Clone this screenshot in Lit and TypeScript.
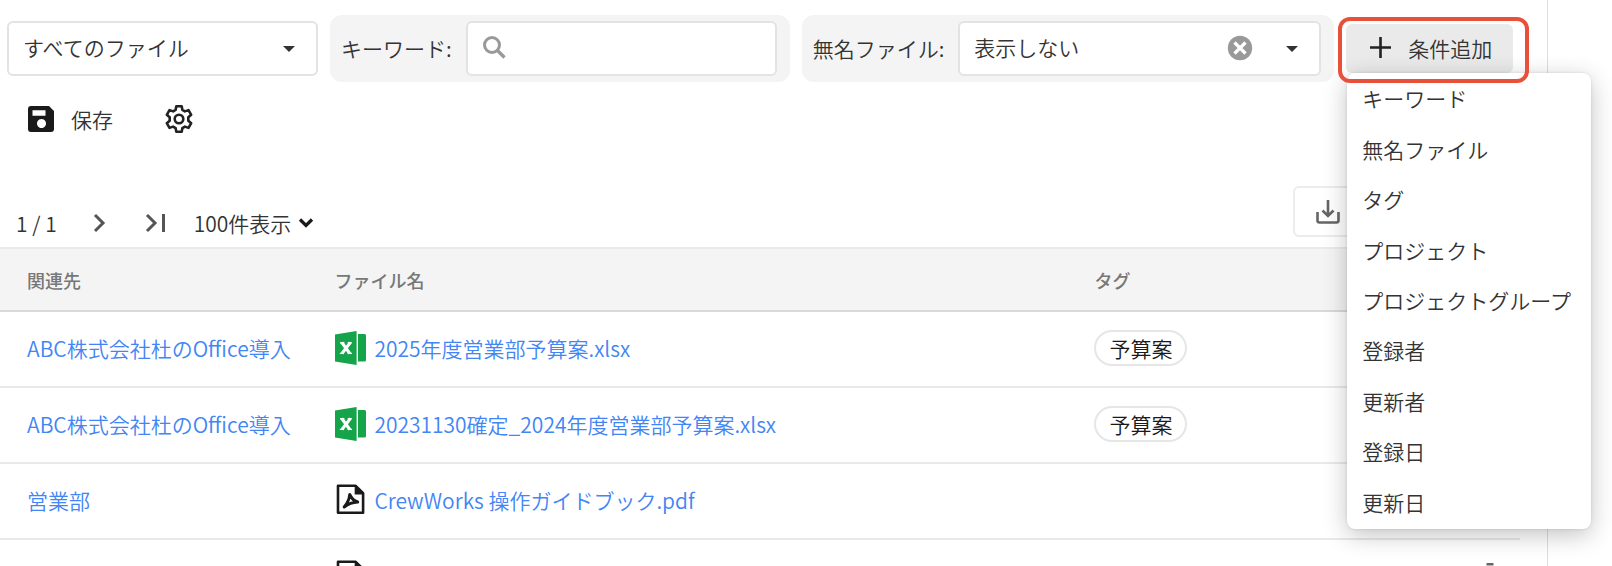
import { LitElement, html, css, svg } from "lit";
import { customElement, state } from "lit/decorators.js";

const excelIcon = svg`<svg class="file-icon" width="34" height="34" viewBox="0 0 34 34" aria-hidden="true">
  <path fill="#16a44a" d="M1 3.6 22.6 0v34L1 30.6zM24 3h6.500q1.500 0 1.500 1.500V29q0 1.500-1.500 1.500H24z"/>
  <path fill="none" stroke="#fff" stroke-width="3" d="m7.800 11.500 8 11M16.300 11.500l-8.300 11"/>
  <path stroke="#fff" stroke-width="1.400" d="M6 11.700h4.400M13.800 11.700h4M5.800 22.400h4.200M13.600 22.400h4.400"/>
</svg>`;

const pdfIcon = svg`<svg class="file-icon" width="34" height="34" viewBox="0 0 34 34" aria-hidden="true">
  <path fill="none" stroke="#1a1a1a" stroke-width="2.600" stroke-linejoin="round" d="M4 2.800h17.700l7.400 7.400v19.500H4z"/>
  <path fill="#1a1a1a" d="M20.700 2.500h1.500l7.500 7.500v1.500h-9z"/>
  <path fill="none" stroke="#1a1a1a" stroke-width="3" stroke-linecap="round" stroke-linejoin="round" d="M15.700 11.500c-.3 4.500-2.500 9-5.500 12.500 3.500-2.800 8-4.800 13.500-5-3.600-1-6.300-3.800-8-7.500z"/>
</svg>`;

const trashIcon = svg`<svg width="26" height="26" viewBox="0 0 26 26" fill="none" stroke="#666" stroke-width="2.400">
  <path d="M9.500 1.200h7M3 5h20M5.500 5v19h15V5M10.500 10v9M15.500 10v9"/>
</svg>`;

const caret = svg`<svg class="caret" width="14" height="8" viewBox="0 0 14 8" aria-hidden="true"><path fill="#333" d="M1 1h12L7 7z"/></svg>`;

interface FileRow {
  owner: string;
  kind: "excel" | "pdf";
  name: string;
  tag?: string;
}

@customElement("app-root")
export class AppRoot extends LitElement {
  @state() private files: FileRow[] = [
    { owner: "ABC株式会社杜のOffice導入", kind: "excel", name: "2025年度営業部予算案.xlsx", tag: "予算案" },
    { owner: "ABC株式会社杜のOffice導入", kind: "excel", name: "20231130確定_2024年度営業部予算案.xlsx", tag: "予算案" },
    { owner: "営業部", kind: "pdf", name: "CrewWorks 操作ガイドブック.pdf" },
    { owner: "", kind: "pdf", name: "CrewWorks 操作ガイドブック.pdf" },
  ];

  private conditions = ["キーワード", "無名ファイル", "タグ", "プロジェクト", "プロジェクトグループ", "登録者", "更新者", "登録日", "更新日"];

  static styles = css`
    :host {
      display: grid;
      grid-template-columns: minmax(0, 1fr) 64px;
      height: 100vh;
      overflow: hidden;
      background: #fff;
      color: #333;
      font-family: "Noto Sans CJK JP", sans-serif;
      font-size: 21px;
      font-weight: 350;
      line-height: 32px;
    }
    * { box-sizing: border-box; }
    button, select, input {
      font: inherit;
      color: inherit;
      background: none;
      border: 0;
      padding: 0;
      margin: 0;
      outline: none;
    }
    select { appearance: none; }
    a { color: #4285f4; text-decoration: none; }
    svg { display: block; flex: none; }
    .main { border-right: 1px solid #ddd; padding-top: 15px; }
    .filters { display: flex; gap: 12px; padding-left: 7px; align-items: center; }
    .group {
      display: flex;
      align-items: center;
      gap: 14px;
      padding: 6px 13px 6px 11px;
      background: #f4f4f4;
      border-radius: 12px;
    }
    .box {
      display: flex;
      align-items: center;
      width: 311px;
      height: 55px;
      padding: 0 20px 4px 14px;
      background: #fff;
      border: 2px solid #e3e3e3;
      border-radius: 6px;
    }
    .box.wide { width: 363px; }
    .box select, .box input { flex: 1; min-width: 0; height: 32px; }
    .box .caret { margin-top: 4px; }
    .clear { margin: 3px 32px 0 0; }
    .group label { padding-bottom: 2px; }
    .add { position: relative; }
    .add-button {
      display: flex;
      align-items: center;
      gap: 16px;
      height: 49px;
      padding: 0 21px 2px 23px;
      background: #eaeaea;
      border-radius: 6px;
    }
    .frame {
      position: absolute;
      inset: -7px -16px -10px -8px;
      border: 4px solid #e8503a;
      border-radius: 12px;
      z-index: 2;
      pointer-events: none;
    }
    .menu {
      position: absolute;
      top: 49px;
      left: 1px;
      height: 456px;
      margin: 0;
      padding: 0 0 2px;
      display: flex;
      flex-direction: column;
      list-style: none;
      background: #fff;
      border-radius: 8px;
      box-shadow: 0 6px 24px rgba(0, 0, 0, 0.24), 0 0 3px rgba(0, 0, 0, 0.12);
      z-index: 1;
    }
    .menu li { flex: 1; display: flex; }
    .menu button { width: 100%; padding: 0 20px 0 15px; text-align: left; white-space: nowrap; }
    .actions { display: flex; align-items: center; gap: 51px; padding: 21px 26px 0; }
    .save { display: flex; align-items: center; gap: 15px; }
    .toolbar { display: flex; align-items: flex-start; justify-content: space-between; padding: 51px 26px 8px 16px; }
    .pager { display: flex; align-items: center; padding-top: 21px; }
    .next { margin: 0 36px 0 34px; }
    .last { margin-right: 27px; }
    .count { display: flex; align-items: center; gap: 6px; }
    .export {
      display: flex;
      align-items: center;
      width: 228px;
      height: 51px;
      padding-left: 20px;
      border: 2px solid #ececec;
      border-radius: 6px;
    }
    table { width: calc(100% - 27px); border-collapse: separate; border-spacing: 0; table-layout: fixed; }
    .table-wrap { background: linear-gradient(#f4f4f4 0 0) top / 100% 65px no-repeat; }
    .col-owner { width: 22%; }
    .col-file { width: 50%; }
    .col-actions { width: 60px; }
    th {
      height: 65px;
      padding: 0;
      border-top: 2px solid #eaeaea;
      border-bottom: 2px solid #d9d9d9;
      color: #777;
      font-size: 18px;
      font-weight: 500;
      text-align: left;
    }
    td { height: 76px; padding: 0 0 2px; border-bottom: 2px solid #e9e9e9; }
    th:first-child, td:first-child { padding-left: 27px; }
    .file { display: flex; align-items: center; gap: 6px; }
    .delete { display: block; margin: 0 auto; }
    .tag {
      display: inline-block;
      height: 36px;
      padding: 0 13px;
      border: 2px solid #e6e6e6;
      border-radius: 18px;
      color: #1a1a1a;
    }
  `;

  render() {
    return html`
      <main class="main">
        <div class="filters">
          <div class="box">
            <select aria-label="ファイル"><option>すべてのファイル</option></select>
            ${caret}
          </div>
          <div class="group">
            <label for="keyword">キーワード:</label>
            <div class="box">
              <svg width="24" height="24" viewBox="0 0 24 24" aria-hidden="true">
                <circle cx="10" cy="10" r="7.500" fill="none" stroke="#999" stroke-width="3"/>
                <path d="m15.500 15.500 7 7" stroke="#999" stroke-width="3.400"/>
              </svg>
              <input id="keyword" type="text" />
            </div>
          </div>
          <div class="group">
            <label for="unnamed">無名ファイル:</label>
            <div class="box wide">
              <select id="unnamed"><option>表示しない</option></select>
              <button class="clear" aria-label="クリア">
                <svg width="26" height="26" viewBox="0 0 26 26"><circle cx="13" cy="13" r="12.200" fill="#999"/><path d="m7.500 7.500 11 11M18.500 7.500l-11 11" stroke="#fff" stroke-width="3.200"/></svg>
              </button>
              ${caret}
            </div>
          </div>
          <div class="add">
            <button class="add-button">
              <svg width="23" height="23" viewBox="0 0 23 23"><path d="M11.500 1v21M1 11.500h21" stroke="#222" stroke-width="2.600"/></svg>
              条件追加
            </button>
            <ul class="menu">
              ${this.conditions.map((c) => html`<li><button>${c}</button></li>`)}
            </ul>
            <div class="frame"></div>
          </div>
        </div>
        <div class="actions">
          <button class="save">
            <svg width="30" height="30" viewBox="0 0 30 30"><path fill="#1a1a1a" fill-rule="evenodd" d="M5 2h18l5 5v18q0 3-3 3H5q-3 0-3-3V5q0-3 3-3zM6.500 6.300v5.500h13V6.300zM15.500 15a4.500 4.500 0 1 0 .01 0z"/></svg>
            保存
          </button>
          <button aria-label="設定">
            <svg width="30" height="30" viewBox="0 0 30 30" fill="none" stroke="#222" stroke-width="2.600" stroke-linejoin="round">
              <path d="M12.300 2.200h5.400l.7 3.700 2.500 1.500 3.600-1.300 2.700 4.700-2.900 2.500v3.400l2.900 2.500-2.700 4.700-3.600-1.300-2.500 1.500-.7 3.700h-5.400l-.7-3.700-2.500-1.500-3.600 1.300-2.700-4.700 2.900-2.500v-3.400l-2.900-2.500 2.700-4.700 3.600 1.300 2.500-1.500z"/>
              <circle cx="15" cy="15" r="4.300"/>
            </svg>
          </button>
        </div>
        <div class="toolbar">
          <div class="pager">
            <span>1 / 1</span>
            <button class="next" aria-label="次へ"><svg width="18" height="22" viewBox="0 0 18 22" fill="none" stroke="#555" stroke-width="3"><path d="m4 3 8 8-8 8"/></svg></button>
            <button class="last" aria-label="最後へ"><svg width="22" height="22" viewBox="0 0 22 22" fill="none" stroke="#555" stroke-width="3"><path d="m2 3 8 8-8 8M18.500 2v18"/></svg></button>
            <span class="count">
              <select aria-label="表示件数"><option>100件表示</option></select>
              <svg width="16" height="12" viewBox="0 0 16 12" fill="none" stroke="#1a1a1a" stroke-width="3.200"><path d="m2 2.500 6 6 6-6"/></svg>
            </span>
          </div>
          <button class="export" aria-label="ダウンロード">
            <svg width="26" height="26" viewBox="0 0 26 26" fill="none" stroke="#666" stroke-width="2.600"><path d="M2.500 13v8.500q0 2 2 2h17q2 0 2-2V13M13 1v15.500M7.500 11.500l5.500 5.500 5.500-5.500"/></svg>
          </button>
        </div>
        <div class="table-wrap">
          <table>
            <thead>
              <tr><th class="col-owner">関連先</th><th class="col-file">ファイル名</th><th>タグ</th><th class="col-actions"></th></tr>
            </thead>
            <tbody>
              ${this.files.map((f) => html`<tr>
                <td><a href="#">${f.owner}</a></td>
                <td><a class="file" href="#">${f.kind === "excel" ? excelIcon : pdfIcon}<span>${f.name}</span></a></td>
                <td>${f.tag ? html`<span class="tag">${f.tag}</span>` : ""}</td>
                <td><button class="delete" aria-label="削除">${trashIcon}</button></td>
              </tr>`)}
            </tbody>
          </table>
        </div>
      </main>
    `;
  }
}
